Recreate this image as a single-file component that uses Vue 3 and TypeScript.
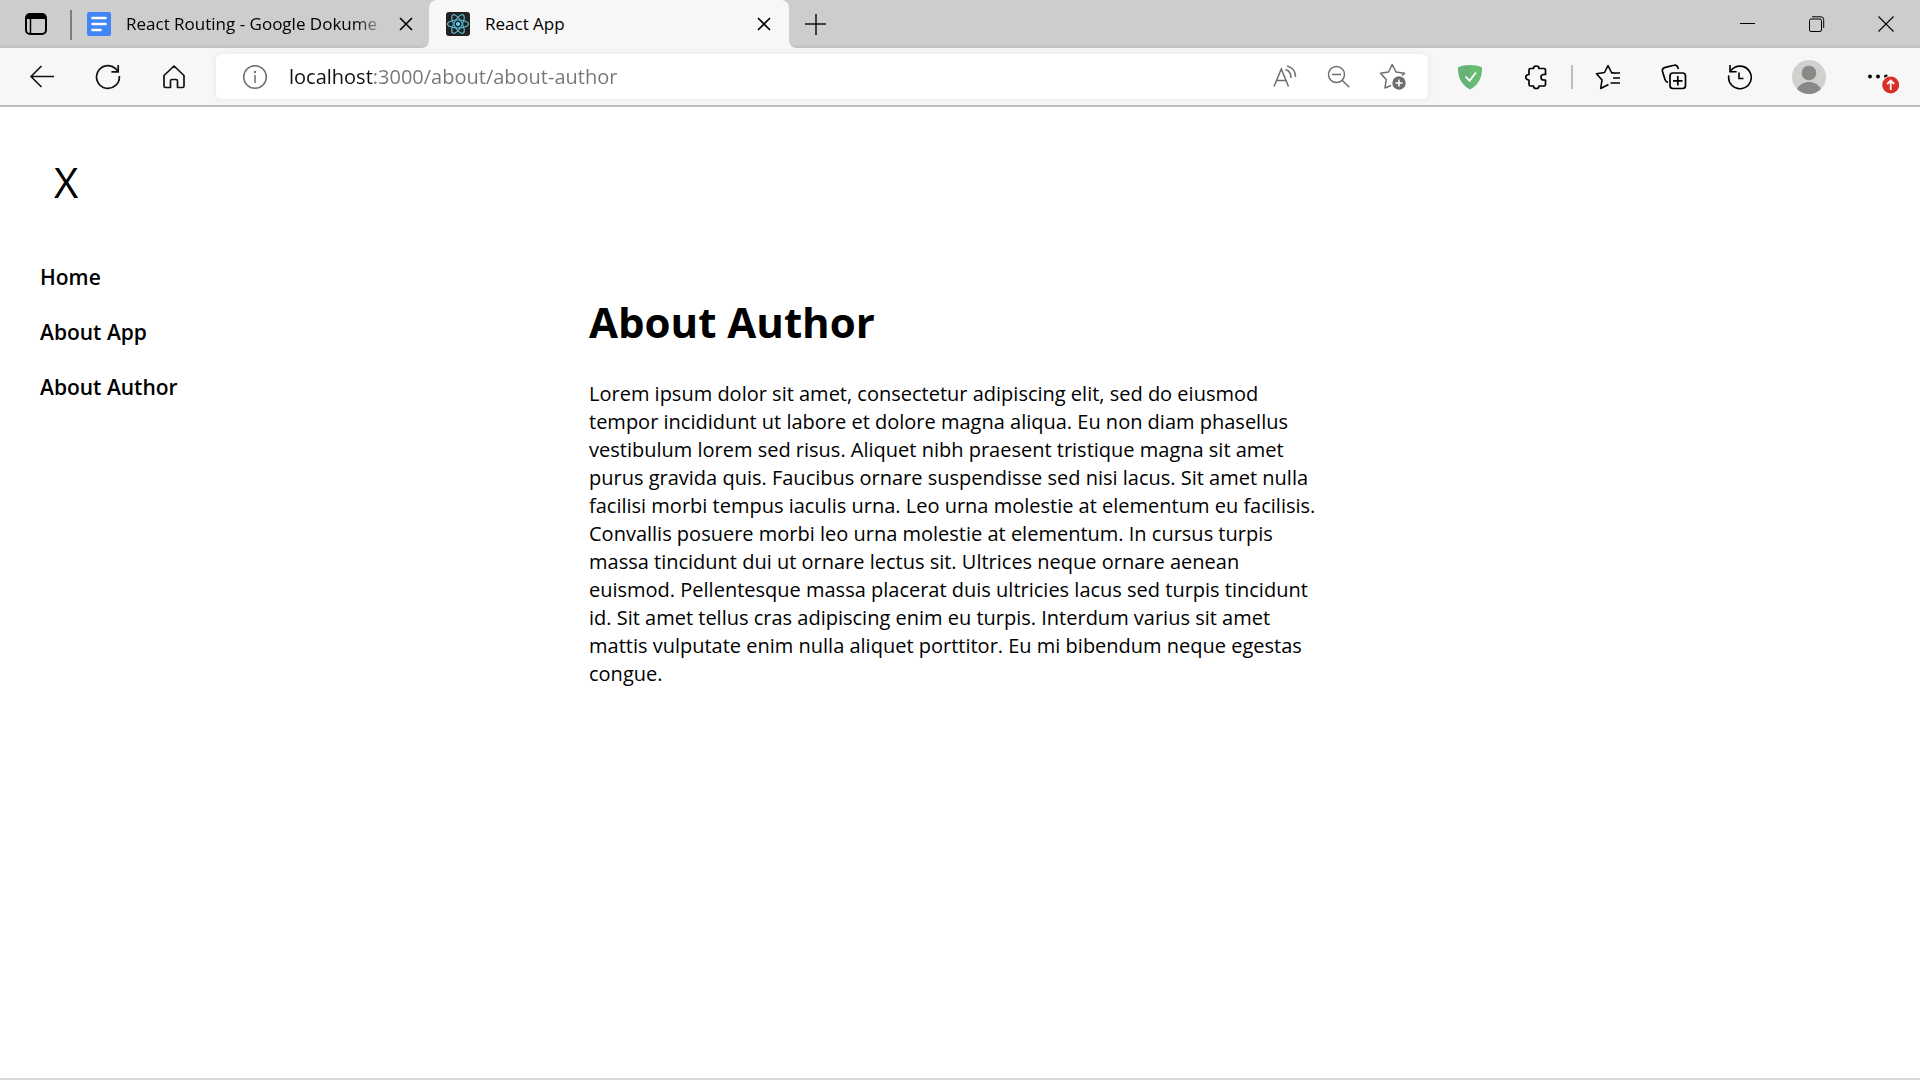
<script setup lang="ts">
import { ref } from 'vue'

interface MenuItem {
  label: string
  path: string
}

const url = ref('localhost:3000/about/about-author')

const menu: MenuItem[] = [
  { label: 'Home', path: '#/' },
  { label: 'About App', path: '#/about/about-app' },
  { label: 'About Author', path: '#/about/about-author' },
]

const paragraph: string[] = [
  'Lorem ipsum dolor sit amet, consectetur adipiscing elit, sed do eiusmod',
  'tempor incididunt ut labore et dolore magna aliqua. Eu non diam phasellus',
  'vestibulum lorem sed risus. Aliquet nibh praesent tristique magna sit amet',
  'purus gravida quis. Faucibus ornare suspendisse sed nisi lacus. Sit amet nulla',
  'facilisi morbi tempus iaculis urna. Leo urna molestie at elementum eu facilisis.',
  'Convallis posuere morbi leo urna molestie at elementum. In cursus turpis',
  'massa tincidunt dui ut ornare lectus sit. Ultrices neque ornare aenean',
  'euismod. Pellentesque massa placerat duis ultricies lacus sed turpis tincidunt',
  'id. Sit amet tellus cras adipiscing enim eu turpis. Interdum varius sit amet',
  'mattis vulputate enim nulla aliquet porttitor. Eu mi bibendum neque egestas',
  'congue.',
]
</script>

<template>
  <div class="window">
    <header class="chrome">
      <div class="tab-strip">
        <button class="tab-actions" aria-label="Tab actions">
          <svg width="22" height="22" viewBox="0 0 22 22">
            <rect x="1" y="1" width="20" height="20" rx="4" fill="none" stroke="#000" stroke-width="2" />
            <path d="M1 6V4a3 3 0 0 1 3-3h14a3 3 0 0 1 3 3v2z" fill="#000" />
            <path d="M5.500 6v15" stroke="#000" stroke-width="1.500" />
          </svg>
        </button>
        <div class="tab">
          <svg class="favicon" width="24" height="24" viewBox="0 0 24 24">
            <rect width="24" height="24" rx="2" fill="#4285f4" />
            <path d="M5.500 6h13M5.500 12h13M5.500 18h8" stroke="#fff" stroke-width="2.600" stroke-linecap="round" />
          </svg>
          <span class="tab-title faded">React Routing - Google Dokume</span>
          <button class="tab-close" aria-label="Close tab">
            <svg width="14" height="14" viewBox="0 0 14 14">
              <path d="M1 1l12 12M13 1L1 13" stroke="#000" stroke-width="1.600" />
            </svg>
          </button>
        </div>
        <div class="tab active">
          <svg class="favicon" width="24" height="24" viewBox="0 0 24 24">
            <rect width="24" height="24" rx="3" fill="#222" />
            <g fill="none" stroke="#61dafb" stroke-width="1.100" opacity="0.85">
              <ellipse cx="12" cy="12" rx="10.500" ry="4" />
              <ellipse cx="12" cy="12" rx="10.500" ry="4" transform="rotate(60 12 12)" />
              <ellipse cx="12" cy="12" rx="10.500" ry="4" transform="rotate(120 12 12)" />
            </g>
            <circle cx="12" cy="12" r="2" fill="#61dafb" />
          </svg>
          <span class="tab-title">React App</span>
          <button class="tab-close" aria-label="Close tab">
            <svg width="14" height="14" viewBox="0 0 14 14">
              <path d="M1 1l12 12M13 1L1 13" stroke="#000" stroke-width="1.600" />
            </svg>
          </button>
        </div>
        <button class="new-tab" aria-label="New tab">
          <svg width="22" height="22" viewBox="0 0 22 22">
            <path d="M11 1v21M0 11h21" stroke="#111" stroke-width="1.500" />
          </svg>
        </button>
        <div class="window-controls">
          <button aria-label="Minimize">
            <svg width="16" height="16" viewBox="0 0 16 16"><path d="M0 7.500h15" stroke="#000" /></svg>
          </button>
          <button aria-label="Restore">
            <svg width="16" height="16" viewBox="0 0 16 16" fill="none" stroke="#000">
              <rect x="0.500" y="3" width="12" height="12.500" rx="1.500" />
              <path d="M3 .800h9a2.700 2.700 0 0 1 2.700 2.700V12" />
            </svg>
          </button>
          <button aria-label="Close">
            <svg width="16" height="16" viewBox="0 0 16 16"><path d="M.500.500l15 15M15.500.500l-15 15" stroke="#000" stroke-width="1.100" /></svg>
          </button>
        </div>
      </div>

      <div class="toolbar">
        <button class="tool" aria-label="Back">
          <svg width="26" height="26" viewBox="0 0 26 26" fill="none" stroke="#111" stroke-width="1.600">
            <path d="M25 12.500H2M12.500 2L2 12.500l10.500 10.500" />
          </svg>
        </button>
        <button class="tool" aria-label="Refresh">
          <svg width="26" height="26" viewBox="0 0 26 26" fill="none" stroke="#111" stroke-width="1.700">
            <path d="M24.300 12A11.400 11.400 0 1 1 20.500 4.500L23 7.500M23.200 1v6.800h-6.800" />
          </svg>
        </button>
        <button class="tool" aria-label="Home">
          <svg width="26" height="26" viewBox="0 0 26 26" fill="none" stroke="#111" stroke-width="1.700" stroke-linejoin="round">
            <path d="M3 11.500L13 2l10 9.500V22a1.500 1.500 0 0 1-1.500 1.500H16.500V17a1.500 1.500 0 0 0-1.500-1.500h-4A1.500 1.500 0 0 0 9.500 17v6.500h-5A1.500 1.500 0 0 1 3 22z" />
          </svg>
        </button>

        <div class="address-bar">
          <button class="site-info" aria-label="View site information">
            <svg width="26" height="26" viewBox="0 0 26 26">
              <circle cx="13" cy="13" r="11.300" fill="none" stroke="#6e6e6e" stroke-width="1.500" />
              <path d="M13 11v8" stroke="#6e6e6e" stroke-width="1.500" />
              <circle cx="13" cy="8" r="1.200" fill="#6e6e6e" />
            </svg>
          </button>
          <input v-model="url" class="url" type="text" aria-label="Address" spellcheck="false" />
          <button class="address-tool" aria-label="Read aloud">
            <svg width="26" height="26" viewBox="0 0 26 26" fill="none" stroke="#6e6e6e" stroke-width="1.500">
              <path d="M2 22.500L9.300 5l7.200 17.500M4.800 16.500h9M13.500 5.500c3.500 1 5.500 4 5.500 8.500M15 2c5.500 1 8.500 5.500 8.500 11" />
            </svg>
          </button>
          <button class="address-tool" aria-label="Zoom out">
            <svg width="26" height="26" viewBox="0 0 26 26" fill="none" stroke="#6e6e6e" stroke-width="1.500">
              <circle cx="10.500" cy="10.500" r="8" />
              <path d="M6 10.500h9M16.200 16.200l7 7" />
            </svg>
          </button>
          <button class="address-tool" aria-label="Add this page to favorites">
            <svg width="28" height="28" viewBox="0 0 28 28" fill="none" stroke="#6e6e6e" stroke-width="1.500" stroke-linejoin="round">
              <path d="M12 22.500L6 25l1.200-8.500L1.500 10.300l8-1.300 3.700-7.500L17 9l8.500 1.300-2.500 2" />
              <circle cx="20" cy="20" r="6.700" fill="#6e6e6e" stroke="none" />
              <path d="M20 16.500v7M16.500 20h7" stroke="#fff" />
            </svg>
          </button>
        </div>

        <button class="tool" aria-label="Ad blocker">
          <svg width="26" height="26" viewBox="0 0 26 26">
            <path d="M13 1C8.500 1 5 1.800 1 3.300C1 12 2.500 19.500 13 25.500z" fill="#67b279" />
            <path d="M13 1c4.500 0 8 .800 12 2.300C25 12 23.500 19.500 13 25.500z" fill="#68bc71" />
            <path d="M8.500 12.500l4 4.300L19 8.500" fill="none" stroke="#fff" stroke-width="1.800" />
          </svg>
        </button>
        <button class="tool" aria-label="Extensions">
          <svg width="26" height="26" viewBox="0 0 26 26" fill="none" stroke="#000" stroke-width="1.700" stroke-linejoin="round">
            <path d="M7.500 4.500h3C10.500 3 11.500 2 13.200 2s2.800 1 2.800 2.500h5A1.500 1.500 0 0 1 22.500 6v4.500h-1.800c-1.700 0-2.700 1.200-2.700 2.700s1 2.800 2.700 2.800h1.800v4.500A1.500 1.500 0 0 1 21 22h-5c0 1.500-1.200 2.500-2.800 2.500s-2.700-1-2.700-2.500h-3A1.500 1.500 0 0 1 6 20.500V16c-2 0-3.200-1.200-3.200-2.800S4 10.500 6 10.500V6A1.500 1.500 0 0 1 7.500 4.500z" />
          </svg>
        </button>
        <span class="divider"></span>
        <button class="tool" aria-label="Favorites">
          <svg width="26" height="26" viewBox="0 0 26 26" fill="none" stroke="#000" stroke-width="1.600" stroke-linejoin="round">
            <path d="M13.500 20.500L5.700 24.500 7 16 1.500 9.800l8-1.300L13 1.500l3.500 7L21 9.300M16 9h9M18 14h7M15.500 19H25" />
          </svg>
        </button>
        <button class="tool" aria-label="Collections">
          <svg width="26" height="26" viewBox="0 0 26 26" fill="none" stroke="#000" stroke-width="1.700">
            <path d="M7 18.500C5 18 4.500 17 4 15.500L1.500 7.500c-.500-2 .300-3.300 2-3.900L13 1.300c1.800-.500 3.300.400 3.800 2L17.300 5" />
            <rect x="9" y="9" width="15.500" height="15.500" rx="3" />
            <path d="M16.800 12v9.500M12 16.800h9.500" />
          </svg>
        </button>
        <button class="tool" aria-label="History">
          <svg width="26" height="26" viewBox="0 0 26 26" fill="none" stroke="#000" stroke-width="1.600">
            <path d="M1.800 11.500A11.300 11.300 0 1 0 4 6.500M3 1v6.700h6.700M12 8.500v6h4.500" />
          </svg>
        </button>
        <button class="tool profile" aria-label="Profile">
          <svg width="34" height="34" viewBox="0 0 34 34">
            <circle cx="17" cy="17" r="17" fill="#d2d0ce" />
            <circle cx="17" cy="13" r="7.300" fill="#8a8886" />
            <path d="M5 29c2.500-4.700 7-7 12-7s9.500 2.300 12 7a17 17 0 0 1-24 0z" fill="#8a8886" />
          </svg>
        </button>
        <button class="tool more" aria-label="Settings and more">
          <svg width="44" height="36" viewBox="0 0 44 36">
            <circle cx="14" cy="17.500" r="1.900" />
            <circle cx="22" cy="17.500" r="1.900" />
            <circle cx="30" cy="17.500" r="1.900" />
            <circle cx="34.700" cy="26" r="9.500" fill="#f7f7f7" />
            <circle cx="34.700" cy="26" r="8.500" fill="#d93025" />
            <path d="M34.700 31v-9M31.200 25l3.500-3.500 3.500 3.500" fill="none" stroke="#fff" stroke-width="1.800" />
          </svg>
        </button>
      </div>
    </header>

    <div class="page">
      <aside class="sidebar">
        <button class="close-menu">X</button>
        <nav class="menu">
          <a v-for="item in menu" :key="item.label" :href="item.path">{{ item.label }}</a>
        </nav>
      </aside>
      <main class="content">
        <h1>About Author</h1>
        <p>{{ paragraph.join('\n') }}</p>
      </main>
    </div>
  </div>
</template>

<style>
body {
  margin: 0;
  background: #fff;
}
</style>

<style scoped>
.window {
  box-sizing: border-box;
  min-height: 100vh;
  display: flex;
  flex-direction: column;
  border-bottom: 2px solid #d8d8d8;
  background: #fff;
  color: #000;
  font-family: "Open Sans", "Noto Sans", sans-serif;
}

button {
  display: flex;
  align-items: center;
  justify-content: center;
  flex: none;
  margin: 0;
  padding: 0;
  border: 0;
  background: none;
  color: inherit;
  font: inherit;
}

svg {
  display: block;
  flex: none;
}

.chrome {
  border-bottom: 2px solid #bdbdbd;
}

.tab-strip {
  display: flex;
  height: 48px;
  background: linear-gradient(#cdcdcd 44px, #bebebe);
}

.tab-actions {
  position: relative;
  width: 72px;
}

.tab-actions::after {
  content: "";
  position: absolute;
  right: 0;
  top: 10px;
  width: 2px;
  height: 30px;
  background: #7d7d7d;
}

.tab {
  position: relative;
  display: flex;
  align-items: center;
  box-sizing: border-box;
  width: 357px;
  padding: 0 16px 0 15px;
}

.tab.active {
  width: 360px;
  padding: 0 18px 0 17px;
  border-radius: 8px 8px 0 0;
  background: #f7f7f7;
}

.tab.active::before,
.tab.active::after {
  content: "";
  position: absolute;
  bottom: 0;
  width: 6px;
  height: 6px;
}

.tab.active::before {
  right: 100%;
  background: radial-gradient(circle at 0 0, transparent 5px, #f7f7f7 6px);
}

.tab.active::after {
  left: 100%;
  background: radial-gradient(circle at 100% 0, transparent 5px, #f7f7f7 6px);
}

.tab-title {
  flex: 1;
  min-width: 0;
  margin-left: 15px;
  font-size: 17px;
  line-height: 24px;
  white-space: nowrap;
}

.tab-title.faded {
  -webkit-mask-image: linear-gradient(to right, #000 calc(100% - 32px), transparent);
  mask-image: linear-gradient(to right, #000 calc(100% - 32px), transparent);
}

.tab-close {
  width: 14px;
  height: 24px;
  margin-left: 12px;
}

.new-tab {
  width: 54px;
}

.window-controls {
  display: flex;
  margin-left: auto;
}

.window-controls button {
  width: 69px;
}

.toolbar {
  display: flex;
  align-items: center;
  height: 57px;
  padding: 0 9px;
  background: #f7f7f7;
}

.tool {
  width: 66px;
  height: 48px;
}

.address-bar {
  display: flex;
  align-items: center;
  flex: 1;
  min-width: 0;
  height: 45px;
  margin: 0 9px;
  padding: 0 8px 0 26px;
  box-sizing: border-box;
  border-radius: 6px;
  background: #fff;
  box-shadow: 0 0 6px #e6e6e6;
}

.url {
  flex: 1;
  min-width: 0;
  height: 36px;
  margin-left: 21px;
  padding: 0;
  border: 0;
  outline: 0;
  background: linear-gradient(to right, #111 84px, #767676 84px);
  -webkit-background-clip: text;
  background-clip: text;
  color: transparent;
  font-family: inherit;
  font-size: 20px;
}

.address-tool {
  width: 54px;
  height: 36px;
}

.divider {
  width: 2px;
  height: 24px;
  margin: 0 2px;
  background: #bdbdbd;
}

.profile,
.more {
  margin-left: 3px;
}

.page {
  flex: 1;
  display: grid;
  grid-template-columns: 1fr 742px 1fr;
}

.sidebar {
  padding: 48px 40px 0;
}

.close-menu {
  padding: 0 14px;
  font-size: 42px;
  line-height: 54px;
}

.menu {
  display: flex;
  flex-direction: column;
  align-items: flex-start;
  margin-top: 41px;
}

.menu a {
  color: #000;
  font-size: 21px;
  font-weight: 600;
  line-height: 55px;
  text-decoration: none;
}

.content {
  padding-top: 185px;
}

.content h1 {
  margin: 0;
  font-size: 42px;
  font-weight: 700;
  line-height: 60px;
}

.content p {
  margin: 28px 0 0;
  font-size: 20px;
  line-height: 28px;
  white-space: pre;
}
</style>
